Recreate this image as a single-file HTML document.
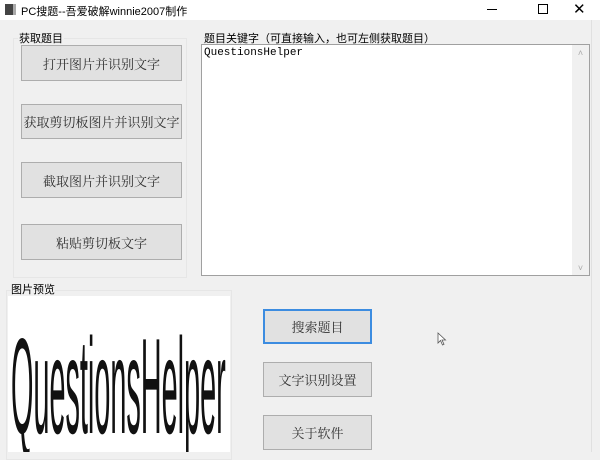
<!DOCTYPE html>
<html><head><meta charset="utf-8"><style>
*{margin:0;padding:0;box-sizing:border-box}
body{width:600px;height:452px;overflow:hidden;background:#f0f0f0;position:relative;font-family:"Liberation Sans","Noto Sans CJK SC",sans-serif;font-size:12px;color:#000}
.abs{position:absolute}
.title{left:0;top:0;width:600px;height:20px;background:#fff}
.btn{position:absolute;background:#e1e1e1;border:1px solid #adadad;font-family:"Noto Serif CJK SC","Liberation Serif",serif;font-size:13px;color:#333;display:flex;align-items:center;justify-content:center;white-space:nowrap}
.lbl{position:absolute;font-size:11px;font-family:"Noto Sans CJK SC",sans-serif}
</style></head><body>
<div class="abs title">
  <div class="abs" style="left:5px;top:4px;width:11px;height:11px;background:#444;border-right:3px solid #aaa"></div>
  <div class="abs" style="left:21px;top:3px;font-size:11px;font-family:'Liberation Sans','Noto Sans CJK SC',sans-serif">PC搜题--吾爱破解winnie2007制作</div>
  <div class="abs" style="left:487px;top:9px;width:10px;height:1px;background:#000"></div>
  <div class="abs" style="left:538px;top:4px;width:10px;height:10px;border:1px solid #000"></div>
  <div class="abs" style="left:573px;top:0px;font-size:15px;font-weight:300">✕</div>
</div>
<div class="abs" style="left:13px;top:38px;width:174px;height:240px;border:1px solid #e6e6e6"></div>
<div class="lbl" style="left:18px;top:30px;background:#f0f0f0;padding:0 1px">获取题目</div>
<div class="btn" style="left:21px;top:45px;width:161px;height:36px">打开图片并识别文字</div>
<div class="btn" style="left:21px;top:104px;width:161px;height:35px">获取剪切板图片并识别文字</div>
<div class="btn" style="left:21px;top:162px;width:161px;height:36px">截取图片并识别文字</div>
<div class="btn" style="left:21px;top:224px;width:161px;height:36px">粘贴剪切板文字</div>
<div class="lbl" style="left:204px;top:30px">题目关键字（可直接输入，也可左侧获取题目）</div>
<div class="abs" style="left:201px;top:44px;width:389px;height:232px;background:#fff;border:1px solid #a0a0a0">
  <div class="abs" style="left:2px;top:2px;font-family:'Liberation Mono',monospace;font-size:11px">QuestionsHelper</div>
  <div class="abs" style="right:0;top:0;width:17px;height:230px;background:#f0f0f0;color:#aaa;font-size:9px;text-align:center">
    <div style="margin-top:3px">˄</div><div style="position:absolute;bottom:2px;width:17px">˅</div></div>
</div>
<div class="abs" style="left:6px;top:290px;width:226px;height:170px;border:1px solid #e6e6e6"></div>
<div class="lbl" style="left:11px;top:281px;background:#f0f0f0">图片预览</div>
<div class="abs" style="left:8px;top:296px;width:222px;height:156px;background:#fff;overflow:hidden">
  <div class="abs" style="left:3px;top:22px;font-family:'Liberation Sans',sans-serif;font-size:136px;line-height:136px;transform:scaleX(0.212);transform-origin:0 0;white-space:nowrap;color:#111">QuestionsHelper</div>
</div>
<div class="btn" style="left:263px;top:309px;width:109px;height:35px;border:2px solid #3c8ce0">搜索题目</div>
<div class="btn" style="left:263px;top:362px;width:109px;height:35px">文字识别设置</div>
<div class="btn" style="left:263px;top:415px;width:109px;height:35px">关于软件</div>
<div class="abs" style="left:591px;top:20px;width:1px;height:432px;background:#e0e0e0"></div>
<svg class="abs" style="left:437px;top:332px" width="10" height="14"><path d="M1 1 L1 11 L3.5 8.5 L5.5 13 L7 12.3 L5 8 L8.5 8 Z" fill="#fff" stroke="#555" stroke-width="0.8"/></svg>
</body></html>
